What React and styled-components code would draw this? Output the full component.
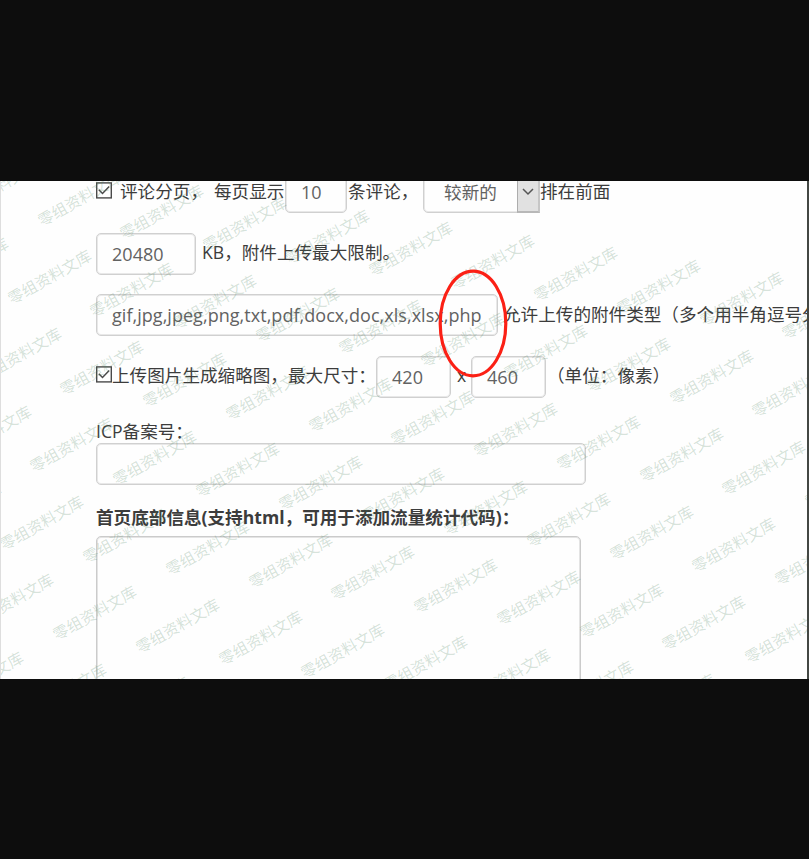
import React from "react";
import styled, { createGlobalStyle } from "styled-components";

const GlobalStyle = createGlobalStyle`
  body { margin: 0; background: #0d0d0d; }
  * { box-sizing: border-box; }
`;

const Page = styled.main`
  width: 809px;
  height: 859px;
  padding-top: 181px;
  overflow: hidden;
  background: #0d0d0d;
`;

const Panel = styled.section`
  position: relative;
  height: 498px;
  overflow: hidden;
  background: #fefefe;
  border-left: 1px solid #dedede;
  border-right: 2px solid #444844;
  font-family: "Open Sans", "Noto Sans CJK SC", sans-serif;
  font-size: 17.6px;
  line-height: 24px;
  color: #3c3c3c;
`;

const Form = styled.div`
  display: flex;
  flex-direction: column;
  margin-top: -10px;
  padding-left: 95px;
  width: 950px;
`;

const Row = styled.div`
  display: flex;
  align-items: center;
  height: 42px;
  margin-bottom: ${(p) => p.$gap ?? 20}px;
  white-space: nowrap;
`;

const Text = styled.span`
  flex: none;
  width: ${(p) => p.$w}px;
  margin-left: ${(p) => p.$ml ?? 0}px;
  padding-bottom: ${(p) => p.$up ?? 3}px;
`;

const Field = styled.div`
  flex: none;
  display: flex;
  align-items: center;
  width: ${(p) => p.$w}px;
  height: 42px;
  margin-right: ${(p) => p.$mr ?? 1}px;
  padding: 0 0 0 15px;
  border: 1px solid #d0d0d0;
  border-radius: 5px;
  box-shadow: inset 0 0 0 1px #e8e8e8;
  font-size: 18px;
  letter-spacing: 0.04px;
  color: #626262;
  white-space: nowrap;
`;

const SelectBox = styled(Field)`
  margin-left: 5px;
  padding-left: 20px;
  font-size: 17.6px;
`;

const SelectArrow = styled.span`
  display: flex;
  align-items: center;
  justify-content: center;
  align-self: stretch;
  width: 23px;
  margin: -1px -1px -1px auto;
  background: #e1e1e1;
  border: 1px solid #adadad;
  border-right: 2px solid #c6c6c6;
  border-bottom: 2px solid #b8b8b8;
`;

const Check = styled.svg`
  flex: none;
  width: 16px;
  height: 17px;
  margin-bottom: ${(p) => p.$up}px;
`;

const Label = styled.label`
  height: 24px;
  margin-top: -1px;
  margin-bottom: ${(p) => p.$gap}px;
  font-weight: ${(p) => (p.$bold ? 700 : 400)};
  white-space: nowrap;
`;

const TextArea = styled.div`
  width: 485px;
  height: 200px;
  border: 1px solid #cbcbcb;
  border-radius: 5px;
  box-shadow: inset 0 0 0 1px #e4e4e4;
`;

const Overlay = styled.div`
  position: absolute;
  inset: 0;
  overflow: hidden;
  pointer-events: none;
`;

const Mark = styled.span`
  position: absolute;
  width: 110px;
  height: 24px;
  margin: -12px 0 0 -55px;
  font-family: "Noto Sans CJK SC", sans-serif;
  font-size: 15.5px;
  line-height: 24px;
  text-align: center;
  white-space: nowrap;
  color: rgba(80, 135, 95, 0.24);
  transform: rotate(-29.5deg);
`;

const Highlight = styled.svg`
  position: absolute;
  left: 435px;
  top: 86px;
  width: 74px;
  height: 114px;
`;

const marks = [];
for (let row = -1; row < 8; row += 1) {
  for (let col = -2; col < 15; col += 1) {
    const x = 47.5 + col * 82.75 - row * 30;
    const y = 95.2 + col * 12.5 + row * 77.8;
    if (x > -50 && x < 860 && y > -40 && y < 540) marks.push({ x, y });
  }
}

const Checkbox = ({ up = 4 }) => (
  <Check viewBox="0 0 16 17" $up={up}>
    <rect x="0.7" y="0.9" width="14.6" height="15" fill="#fff" stroke="#4a4a4a" strokeWidth="1.4" />
    <path d="M2.8 7.8 6.5 11.5 13.2 4.5" fill="none" stroke="#4a4a4a" strokeWidth="1.5" />
  </Check>
);

export default function App() {
  return (
    <>
      <GlobalStyle />
      <Page>
        <Panel>
          <Form>
            <Row>
              <Checkbox />
              <Text $w={94} $ml={8}>评论分页，</Text>
              <Text $w={71}>每页显示</Text>
              <Field $w={62}>10</Field>
              <Text $w={70}>条评论，</Text>
              <SelectBox $w={117} $mr={0}>
                较新的
                <SelectArrow>
                  <svg width="14" height="10" viewBox="0 0 14 10">
                    <path d="M2 2 7 7 12 2" fill="none" stroke="#555" strokeWidth="1.5" />
                  </svg>
                </SelectArrow>
              </SelectBox>
              <Text $w={80}>排在前面</Text>
            </Row>
            <Row $gap={19}>
              <Field $w={100}>20480</Field>
              <Text $w={300} $ml={5} $up={4}>KB，附件上传最大限制。</Text>
            </Row>
            <Row>
              <Field $w={402}>gif,jpg,jpeg,png,txt,pdf,docx,doc,xls,xlsx,php</Field>
              <Text $w={360} $ml={4}>允许上传的附件类型（多个用半角逗号分</Text>
            </Row>
            <Row $gap={22}>
              <Checkbox up={6} />
              <Text $w={264} $up={4}>上传图片生成缩略图，最大尺寸：</Text>
              <Field $w={75}>420</Field>
              <Text $w={14} $ml={5} $up={4}>x</Text>
              <Field $w={75}>460</Field>
              <Text $w={130} $up={4}>（单位：像素）</Text>
            </Row>
            <Label $gap={0}>ICP备案号：</Label>
            <Row $gap={21}>
              <Field $w={490} />
            </Row>
            <Label $gap={7} $bold>首页底部信息(支持html，可用于添加流量统计代码)：</Label>
            <TextArea />
          </Form>
          <Overlay>
            {marks.map((m) => (
              <Mark key={`${m.x}:${m.y}`} style={{ left: m.x, top: m.y }}>
                零组资料文库
              </Mark>
            ))}
          </Overlay>
          <Highlight viewBox="0 0 74 114">
            <ellipse cx="37" cy="56.5" rx="32.8" ry="52.3" fill="none" stroke="#fb2015" strokeWidth="3.2" />
          </Highlight>
        </Panel>
      </Page>
    </>
  );
}
